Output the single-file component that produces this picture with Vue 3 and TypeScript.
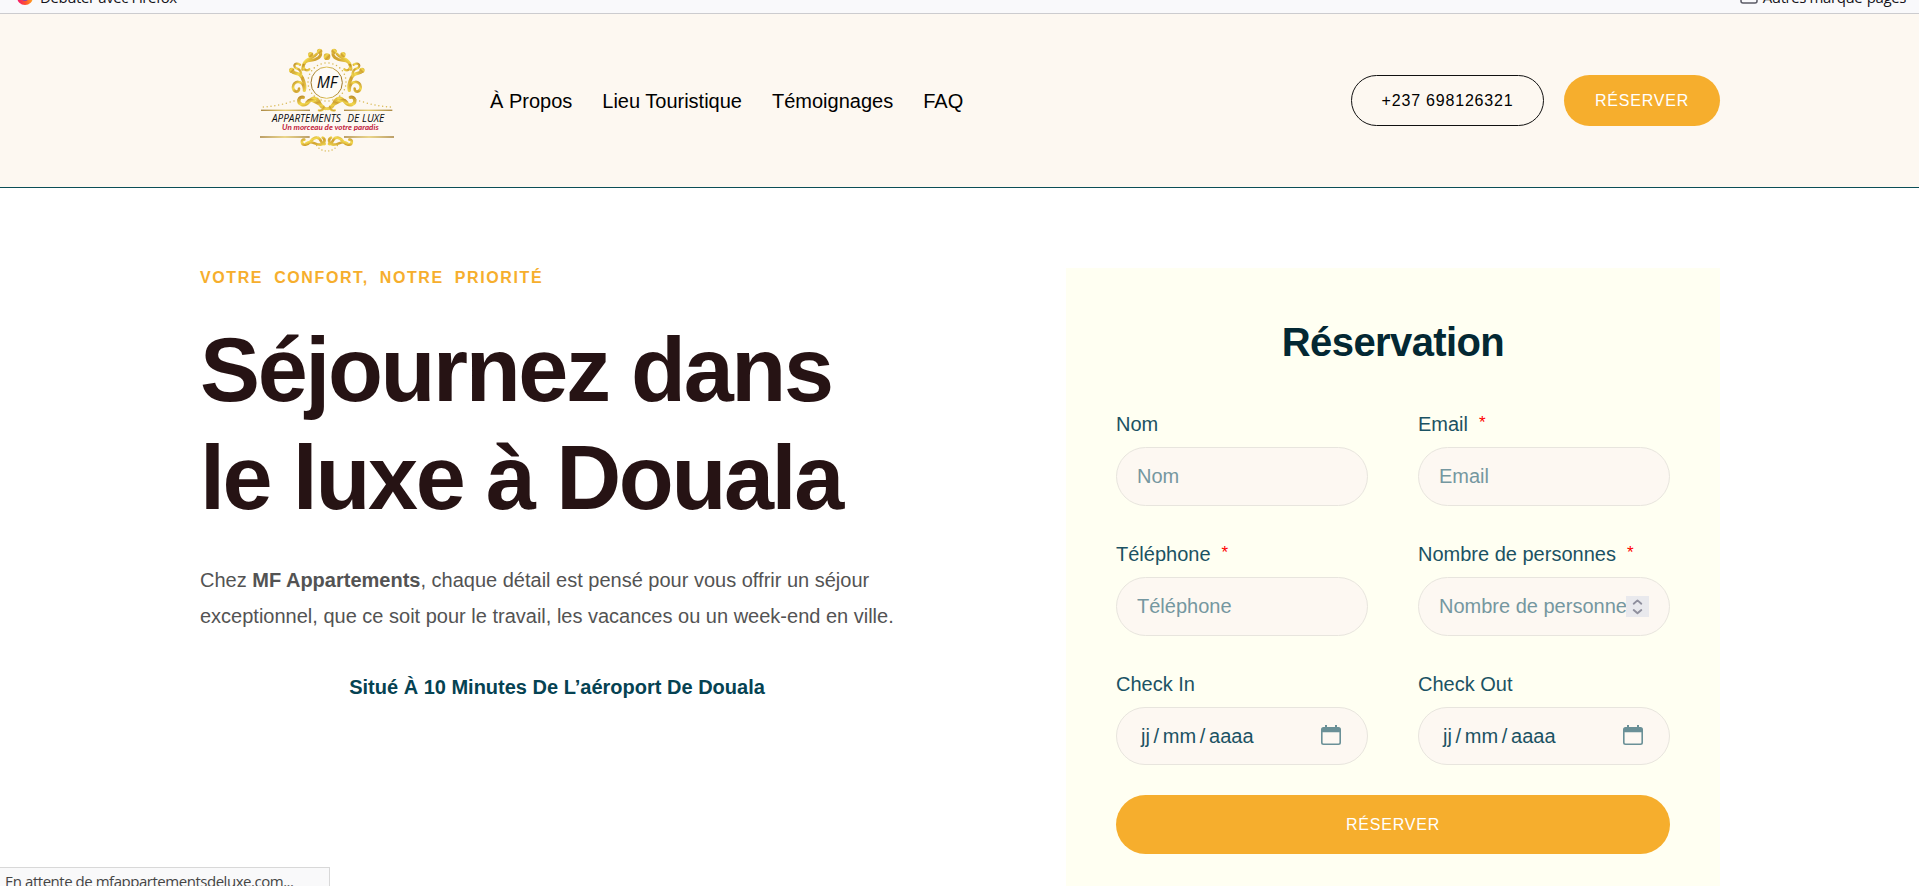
<script setup lang="ts">
interface Field {
  label: string
  kind: 'text' | 'number' | 'date'
  required: boolean
}

const links: string[] = ['À Propos', 'Lieu Touristique', 'Témoignages', 'FAQ']

const fields: Field[] = [
  { label: 'Nom', kind: 'text', required: false },
  { label: 'Email', kind: 'text', required: true },
  { label: 'Téléphone', kind: 'text', required: true },
  { label: 'Nombre de personnes', kind: 'number', required: true },
  { label: 'Check In', kind: 'date', required: false },
  { label: 'Check Out', kind: 'date', required: false },
]

interface Dot {
  x: number
  y: number
}

function arc(cx: number, cy: number, r: number, from: number, to: number, count: number): Dot[] {
  return Array.from({ length: count }, (_, i) => {
    const a = ((from + ((to - from) * i) / (count - 1)) * Math.PI) / 180
    return { x: cx + r * Math.cos(a), y: cy + r * Math.sin(a) }
  })
}

const ring: Dot[] = arc(261, 156, 57, 0, 348, 30)
const lowerArc: Dot[] = arc(261, 325, 38, 35, 145, 8)
const sideDots: Dot[] = Array.from({ length: 10 }, (_, i) => ({
  x: 70 + i * 11.5,
  y: 231 - Math.pow(i / 9, 1.6) * 22,
}))
</script>

<template>
  <div class="page">
    <div class="bookmarks">
      <div class="bookmark">
        <svg class="fox" viewBox="0 0 16 16">
          <defs>
            <linearGradient id="fx" x1="0" y1="0.6" x2="1" y2="0.4">
              <stop offset="0" stop-color="#f5156c" />
              <stop offset="0.5" stop-color="#ff5a2a" />
              <stop offset="1" stop-color="#ffb321" />
            </linearGradient>
          </defs>
          <circle cx="8" cy="8" r="8" fill="url(#fx)" />
          <circle cx="8" cy="8.3" r="3.6" fill="#8a3fb0" />
        </svg>
        <span>Débuter avec Firefox</span>
      </div>
      <div class="bookmark">
        <svg class="folder" viewBox="0 0 18 16">
          <rect x="1" y="2" width="16" height="13" rx="2" fill="none" stroke="#5b5b66" stroke-width="1.5" />
        </svg>
        <span>Autres marque-pages</span>
      </div>
    </div>

    <header class="header">
      <svg class="logo" viewBox="0 0 510 405">
        <defs>
          <linearGradient id="gold" x1="0" y1="0" x2="1" y2="1">
            <stop offset="0" stop-color="#c0902a" />
            <stop offset="0.35" stop-color="#f3d94e" />
            <stop offset="0.6" stop-color="#cfa030" />
            <stop offset="1" stop-color="#ecd04c" />
          </linearGradient>
          <linearGradient id="rule" x1="0" x2="1">
            <stop offset="0" stop-color="#9c7426" />
            <stop offset="0.5" stop-color="#e2c558" />
            <stop offset="1" stop-color="#9c7426" />
          </linearGradient>
          <g id="half" fill="none" stroke="url(#gold)" stroke-linecap="round">
            <path d="M188 118C190 86 207 94 226 88C243 82 247 69 235 64" stroke-width="9" />
            <path d="M190 108C198 79 218 89 230 72" stroke-width="8" />
            <circle cx="239" cy="64" r="8" fill="url(#gold)" stroke="none" />
            <circle cx="212" cy="74" r="8" fill="url(#gold)" stroke="none" />
            <path d="M208 118C199 126 188 117 191 105" stroke-width="7" />
            <path d="M154 123C163 134 180 126 187 144C194 159 196 170 193 181" stroke-width="10" />
            <path d="M180 104C164 94 156 111 172 116C181 119 184 128 183 137" stroke-width="7" />
            <circle cx="155" cy="121" r="8" fill="url(#gold)" stroke="none" />
            <path d="M192 176C190 149 159 151 159 171C159 188 178 189 177 176" stroke-width="8" />
            <path d="M190 202C176 198 171 217 184 223C207 232 206 201 225 205C245 209 234 235 257 236" stroke-width="10" />
            <path d="M200 218C214 199 228 221 244 225" stroke-width="9" />
            <path d="M236 241C247 244 255 236 250 228" stroke-width="6" />
            <path d="M193 329C182 328 183 346 197 344C214 341 214 321 231 323C247 324 240 345 254 342" stroke-width="8" />
            <path d="M199 340C217 329 225 346 242 344C254 343 258 328 248 323" stroke-width="8" />
          </g>
        </defs>
        <use href="#half" />
        <use href="#half" transform="translate(521 0) scale(-1 1)" />
        <circle cx="261" cy="80" r="10" fill="url(#gold)" />
        <circle cx="260" cy="158" r="47" fill="#fefbf6" stroke="url(#rule)" stroke-width="3" />
        <g fill="#d8b850">
          <circle v-for="(d, i) in ring" :key="'r' + i" :cx="d.x" :cy="d.y" r="2.3" />
          <circle v-for="(d, i) in lowerArc" :key="'l' + i" :cx="d.x" :cy="d.y" r="2.2" />
          <circle v-for="(d, i) in sideDots" :key="'s' + i" :cx="d.x" :cy="d.y" r="2.2" />
          <circle v-for="(d, i) in sideDots" :key="'t' + i" :cx="521 - d.x" :cy="d.y" r="2.2" />
        </g>
        <g fill="url(#rule)">
          <rect x="63" y="239" width="147" height="3.5" />
          <rect x="312" y="239" width="145" height="3.5" />
          <rect x="60" y="319" width="149" height="4" />
          <rect x="312" y="319" width="150" height="4" />
        </g>
        <text class="mono" x="230" y="174" textLength="62" lengthAdjust="spacingAndGlyphs">MF</text>
        <text class="brand" x="96" y="275" textLength="206" lengthAdjust="spacingAndGlyphs">APPARTEMENTS</text>
        <text class="brand" x="322" y="275" textLength="111" lengthAdjust="spacingAndGlyphs">DE LUXE</text>
        <text class="motto" x="126" y="299" textLength="290" lengthAdjust="spacingAndGlyphs">Un morceau de votre paradis</text>
      </svg>

      <nav class="nav">
        <a v-for="l in links" :key="l" class="link">{{ l }}</a>
      </nav>

      <div class="actions">
        <a class="pill outline">+237 698126321</a>
        <a class="pill solid">RÉSERVER</a>
      </div>
    </header>

    <main class="main">
      <section class="hero">
        <p class="eyebrow">VOTRE CONFORT, NOTRE PRIORITÉ</p>
        <h1 class="title">Séjournez dans<br />le luxe à Douala</h1>
        <p class="intro">
          Chez <strong>MF Appartements</strong>, chaque détail est pensé pour vous offrir un séjour<br />
          exceptionnel, que ce soit pour le travail, les vacances ou un week-end en ville.
        </p>
        <p class="place">Situé À 10 Minutes De L’aéroport De Douala</p>
      </section>

      <section class="card">
        <h2 class="card-title">Réservation</h2>
        <form class="form">
          <div v-for="f in fields" :key="f.label" class="field">
            <label class="label">{{ f.label }}<span v-if="f.required" class="star">*</span></label>
            <div class="input" :class="f.kind">
              <template v-if="f.kind === 'date'">
                <span class="parts"><span>jj</span><span class="sep">/</span><span>mm</span><span class="sep">/</span><span>aaaa</span></span>
                <svg class="cal" viewBox="0 0 20 20">
                  <path
                    fill="#6a9097"
                    fill-rule="evenodd"
                    d="M4 0h2v2h8V0h2v2h1.500a2.500 2.500 0 0 1 2.500 2.500v13a2.500 2.500 0 0 1-2.500 2.500h-15a2.500 2.500 0 0 1-2.500-2.500v-13a2.500 2.500 0 0 1 2.500-2.500h1.500zM1.600 7.300V17.400a1 1 0 0 0 1 1h14.800a1 1 0 0 0 1-1V7.300z"
                  />
                </svg>
              </template>
              <template v-else>
                <span class="hint">{{ f.label }}</span>
                <span v-if="f.kind === 'number'" class="spin">
                  <svg viewBox="0 0 23 21" fill="none" stroke="#8f8f9d" stroke-width="1.9" stroke-linecap="round" stroke-linejoin="round">
                    <path d="M7.700 7.700l3.800-3.300 3.800 3.300M7.700 14l3.800 3.300 3.800-3.300" />
                  </svg>
                </span>
              </template>
            </div>
          </div>
          <button type="button" class="submit">RÉSERVER</button>
        </form>
      </section>
    </main>

    <div class="status">En attente de mfappartementsdeluxe.com...</div>
  </div>
</template>

<style>
html,
body {
  margin: 0;
  overflow: hidden;
  background: #fff;
}
</style>

<style scoped>
.page {
  position: relative;
  height: 886px;
  overflow: hidden;
  background: #fff;
  font-family: 'Liberation Sans', Arial, sans-serif;
  color: #000;
}
.page * {
  box-sizing: border-box;
}
.bookmarks {
  height: 14px;
  overflow: hidden;
  display: flex;
  justify-content: space-between;
  padding: 0 13px 0 17px;
  background: #f9f9fb;
  border-bottom: 1px solid #cccccf;
  font: 15px/20px 'Open Sans', 'Noto Sans', sans-serif;
  letter-spacing: -0.4px;
  color: #15141a;
}
.bookmark {
  display: flex;
  height: 20px;
  margin-top: -13px;
  white-space: nowrap;
}
.fox {
  width: 16px;
  height: 16px;
  margin: 2px 7px 0 0;
}
.folder {
  width: 18px;
  height: 16px;
  margin: 1px 5px 0 0;
}
.header {
  height: 174px;
  display: flex;
  background: #fdf8f1;
  border-bottom: 1px solid #0b4f57;
}
.logo {
  width: 170px;
  height: 135px;
  margin: 16px 0 0 240px;
}
.mono,
.brand {
  font-family: 'Open Sans', 'Noto Sans', sans-serif;
  font-style: italic;
  font-weight: 500;
  fill: #0b0b0b;
}
.mono {
  font-size: 50px;
}
.brand {
  font-size: 34px;
}
.motto {
  font-family: 'Lato', sans-serif;
  font-style: italic;
  font-weight: 700;
  font-size: 22px;
  fill: #c22340;
}
.nav {
  display: flex;
  margin: 75px 0 0 80px;
  font-size: 20px;
  line-height: 24px;
  white-space: nowrap;
}
.link {
  margin-right: 30px;
}
.actions {
  display: flex;
  gap: 20px;
  margin: 61px 199px 0 auto;
}
.pill {
  height: 51px;
  border-radius: 26px;
  display: flex;
  align-items: center;
  justify-content: center;
  padding-top: 1px;
  font-size: 16px;
  letter-spacing: 0.8px;
  white-space: nowrap;
}
.outline {
  width: 193px;
  border: 1px solid #111;
}
.solid {
  width: 156px;
  background: #f6ae2d;
  color: #fff;
}
.main {
  display: flex;
  justify-content: space-between;
  padding: 80px 199px 0 200px;
}
.hero {
  width: 714px;
}
.eyebrow {
  margin: 1px 0 0;
  font-size: 16px;
  line-height: 18px;
  font-weight: 700;
  letter-spacing: 1.6px;
  word-spacing: 5px;
  color: #f6ae2d;
  white-space: nowrap;
}
.title {
  margin: 29px 0 0;
  font-size: 90px;
  line-height: 108px;
  font-weight: 700;
  letter-spacing: -2.4px;
  color: #261314;
  white-space: nowrap;
}
.intro {
  margin: 30px 0 0;
  font-size: 20px;
  line-height: 36px;
  color: #535353;
  white-space: nowrap;
}
.place {
  margin: 35px 0 0;
  font-size: 20px;
  line-height: 36px;
  font-weight: 700;
  text-align: center;
  color: #054252;
  white-space: nowrap;
}
.card {
  width: 654px;
  height: 700px;
  padding: 50px;
  background: #fffff2;
}
.card-title {
  margin: 0;
  text-align: center;
  font-size: 40px;
  line-height: 48px;
  font-weight: 700;
  letter-spacing: -0.6px;
  color: #032833;
}
.form {
  display: grid;
  grid-template-columns: 252px 252px;
  column-gap: 50px;
  margin-top: 44px;
}
.field {
  height: 130px;
}
.label {
  display: flex;
  height: 37px;
  font-size: 20px;
  line-height: 28px;
  color: #1b5263;
  white-space: nowrap;
}
.star {
  margin-left: 11px;
  color: #f00;
  font-size: 17px;
  line-height: 26px;
}
.input {
  height: 59px;
  border: 1px solid #e8e5de;
  border-radius: 30px;
  background: #fdf8f2;
  padding: 0 20px;
  display: flex;
  align-items: center;
  font-size: 20px;
  white-space: nowrap;
}
.hint {
  color: #7597a0;
  overflow: hidden;
  flex: 1;
}
.spin {
  width: 23px;
  height: 21px;
  background: #e9e9ed;
  flex: none;
}
.spin svg {
  display: block;
}
.parts {
  display: flex;
  margin-left: 4px;
  color: #1b5263;
}
.sep {
  margin: 0 3.7px;
}
.input.date {
  height: 58px;
}
.cal {
  width: 20px;
  height: 20px;
  margin: -2px 6px 0 auto;
}
.submit {
  grid-column: 1 / 3;
  height: 59px;
  margin-top: -5px;
  border: 0;
  border-radius: 30px;
  background: #f6ae2d;
  color: #fff;
  font: 16px 'Liberation Sans', Arial, sans-serif;
  letter-spacing: 0.8px;
}
.status {
  position: absolute;
  left: 0;
  top: 867px;
  width: 330px;
  height: 30px;
  padding-left: 5px;
  border: 1px solid #d8d8d8;
  border-left: 0;
  background: #f9f9fa;
  color: #454545;
  font: 15px/27px 'Open Sans', 'Noto Sans', sans-serif;
  letter-spacing: -0.47px;
  white-space: nowrap;
}
</style>
